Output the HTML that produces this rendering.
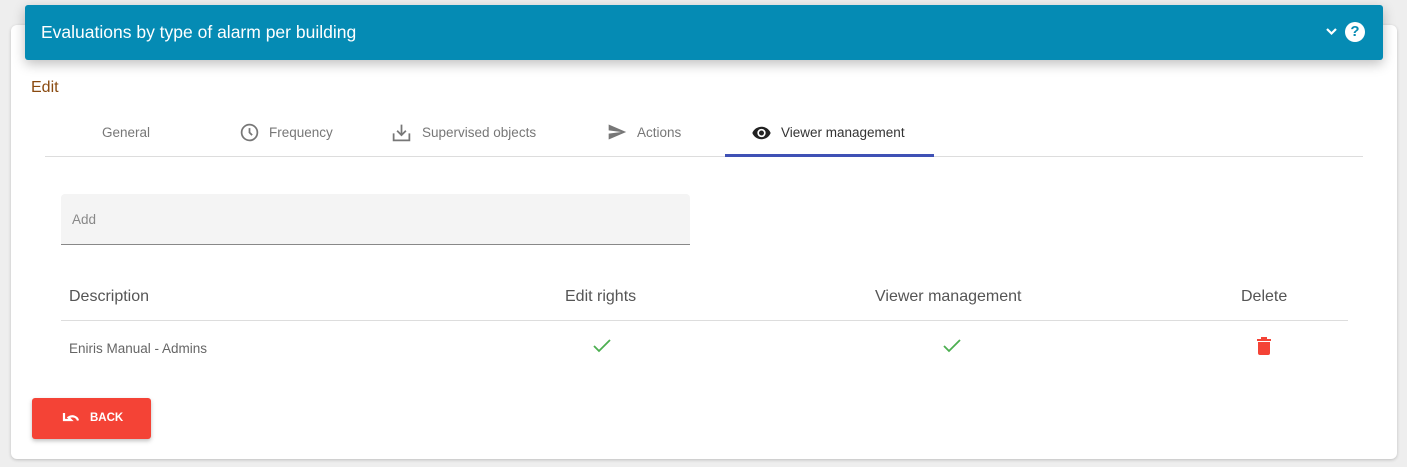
<!DOCTYPE html>
<html><head><style>
body{margin:0;width:1407px;height:467px;background:#eeeeee;font-family:"Liberation Sans",sans-serif;position:relative;overflow:hidden}
.a{position:absolute}
.card{left:11px;top:25px;width:1386px;height:434px;background:#fff;border-radius:6px;box-shadow:0 1px 3px rgba(0,0,0,.2)}
.hdr{left:25px;top:5px;width:1358px;height:55px;background:#058bb4;border-radius:3px;box-shadow:0 4px 12px rgba(0,0,0,.25)}
.t{color:#777;font-size:13.5px}
.h{color:#555;font-size:16px}
</style></head><body>
<div class="a card"></div>
<div class="a hdr"></div>
<div class="a" style="left:41px;top:22px;color:#fff;font-size:17.5px">Evaluations by type of alarm per building</div>
<svg class="a" style="left:1325px;top:26px" width="13" height="12" viewBox="0 0 13 12"><path d="M2 3l4.5 4.5L11 3" stroke="#fff" stroke-width="2.2" fill="none"/></svg>
<div class="a" style="left:1345px;top:22px;width:20px;height:20px;border-radius:50%;background:#fff;color:#058bb4;font-weight:bold;font-size:15px;text-align:center;line-height:20px">?</div>
<div class="a" style="left:31px;top:79px;color:#8a4a10;font-size:16px">Edit</div>
<div class="a t" style="left:102px;top:125px">General</div>
<svg class="a" style="left:239px;top:122px" width="21" height="21" viewBox="0 0 24 24"><circle cx="12" cy="12" r="9" stroke="#777" stroke-width="2" fill="none"/><path d="M12 7v5l3 3" stroke="#777" stroke-width="2" fill="none"/></svg>
<div class="a t" style="left:269px;top:125px">Frequency</div>
<svg class="a" style="left:391px;top:122px" width="21" height="21" viewBox="0 0 24 24"><path d="M3 13v8h18v-8" stroke="#777" stroke-width="2" fill="none"/><path d="M12 3v12M7 10l5 5 5-5" stroke="#777" stroke-width="2" fill="none"/></svg>
<div class="a t" style="left:422px;top:125px">Supervised objects</div>
<svg class="a" style="left:606px;top:122px" width="22" height="20" viewBox="0 0 24 24"><path d="M2 21l21-9L2 3v7l15 2-15 2z" fill="#777"/></svg>
<div class="a t" style="left:637px;top:125px">Actions</div>
<svg class="a" style="left:750px;top:123px" width="23" height="20" viewBox="0 0 24 24"><path d="M12 4.5C7 4.5 2.7 7.6 1 12c1.7 4.4 6 7.5 11 7.5s9.3-3.1 11-7.5c-1.7-4.4-6-7.5-11-7.5zM12 17a5 5 0 110-10 5 5 0 010 10zm0-8a3 3 0 100 6 3 3 0 000-6z" fill="#222"/></svg>
<div class="a" style="left:781px;top:125px;color:#333;font-size:13.5px">Viewer management</div>
<div class="a" style="left:45px;top:156px;width:1318px;height:1px;background:#ddd"></div>
<div class="a" style="left:725px;top:154px;width:209px;height:3px;background:#3f51b5"></div>
<div class="a" style="left:61px;top:194px;width:629px;height:50px;background:#f4f4f4;border-bottom:1px solid #888;border-radius:4px 4px 0 0"></div>
<div class="a t" style="left:72px;top:212px;color:#888">Add</div>
<div class="a h" style="left:69px;top:288px">Description</div>
<div class="a h" style="left:565px;top:288px">Edit rights</div>
<div class="a h" style="left:875px;top:288px">Viewer management</div>
<div class="a h" style="left:1241px;top:288px">Delete</div>
<div class="a" style="left:61px;top:320px;width:1287px;height:1px;background:#ddd"></div>
<div class="a" style="left:69px;top:341px;color:#666;font-size:13.5px">Eniris Manual - Admins</div>
<svg class="a" style="left:592px;top:337px" width="20" height="18" viewBox="0 0 20 18"><path d="M2 9l5 5L18 3" stroke="#4caf50" stroke-width="1.8" fill="none"/></svg>
<svg class="a" style="left:942px;top:337px" width="20" height="18" viewBox="0 0 20 18"><path d="M2 9l5 5L18 3" stroke="#4caf50" stroke-width="1.8" fill="none"/></svg>
<svg class="a" style="left:1256px;top:336px" width="16" height="19" viewBox="0 0 16 19"><path d="M1 3h14v2H1zM5 1h6v2H5zM2 6h12v11a2 2 0 01-2 2H4a2 2 0 01-2-2z" fill="#f44336"/></svg>
<div class="a" style="left:32px;top:398px;width:119px;height:41px;background:#f44336;border-radius:3px;box-shadow:0 2px 4px rgba(0,0,0,.25)"></div>
<svg class="a" style="left:62px;top:411px" width="18" height="12" viewBox="0 0 18 12"><path d="M2 2v7h7L6.5 6.5C8 5.5 10 5 12 5.5c2 .6 3.5 2 4 4" stroke="#fff" stroke-width="2.2" fill="none"/></svg>
<div class="a" style="left:90px;top:412px;color:#fff;font-size:11.5px;font-weight:bold">BACK</div>
</body></html>
